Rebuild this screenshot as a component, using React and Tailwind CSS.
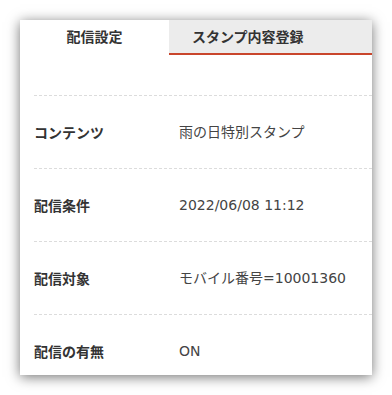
const rows = [
  { label: 'コンテンツ', value: '雨の日特別スタンプ' },
  { label: '配信条件', value: '2022/06/08 11:12' },
  { label: '配信対象', value: 'モバイル番号=10001360' },
  { label: '配信の有無', value: 'ON' },
];

export default function App() {
  return (
    <div
      className="w-[392px] h-[395px] bg-white pt-5 pl-5"
      style={{ fontFamily: '"Noto Sans", "Noto Sans CJK JP", sans-serif' }}
    >
      <div className="w-[352px] h-[355px] bg-white overflow-hidden shadow-[0_2px_12px_rgba(0,0,0,0.55)]">
        {/* tabs */}
        <div className="flex h-[35px]">
          <div className="w-[149px] bg-white flex items-center justify-center pb-[3px] text-[14px] font-bold text-[#333]">
            配信設定
          </div>
          <div className="flex-1 bg-[#ececec] border-b-2 border-[#c9462c] flex items-center pl-[23px] pb-[1px] text-[14px] font-bold text-[#333]">
            スタンプ内容登録
          </div>
        </div>

        <div className="pl-[14px] pt-[40px]">
          {rows.map((r) => (
            <div
              key={r.label}
              className="flex items-center h-[73px] border-t border-dashed border-[#dcdcdc] text-[14px] text-[#333]"
            >
              <div className="w-[145px] font-bold">{r.label}</div>
              <div className="text-[#444] font-['DejaVu_Sans','Noto_Sans_CJK_JP',sans-serif]">{r.value}</div>
            </div>
          ))}
        </div>
      </div>
    </div>
  );
}
